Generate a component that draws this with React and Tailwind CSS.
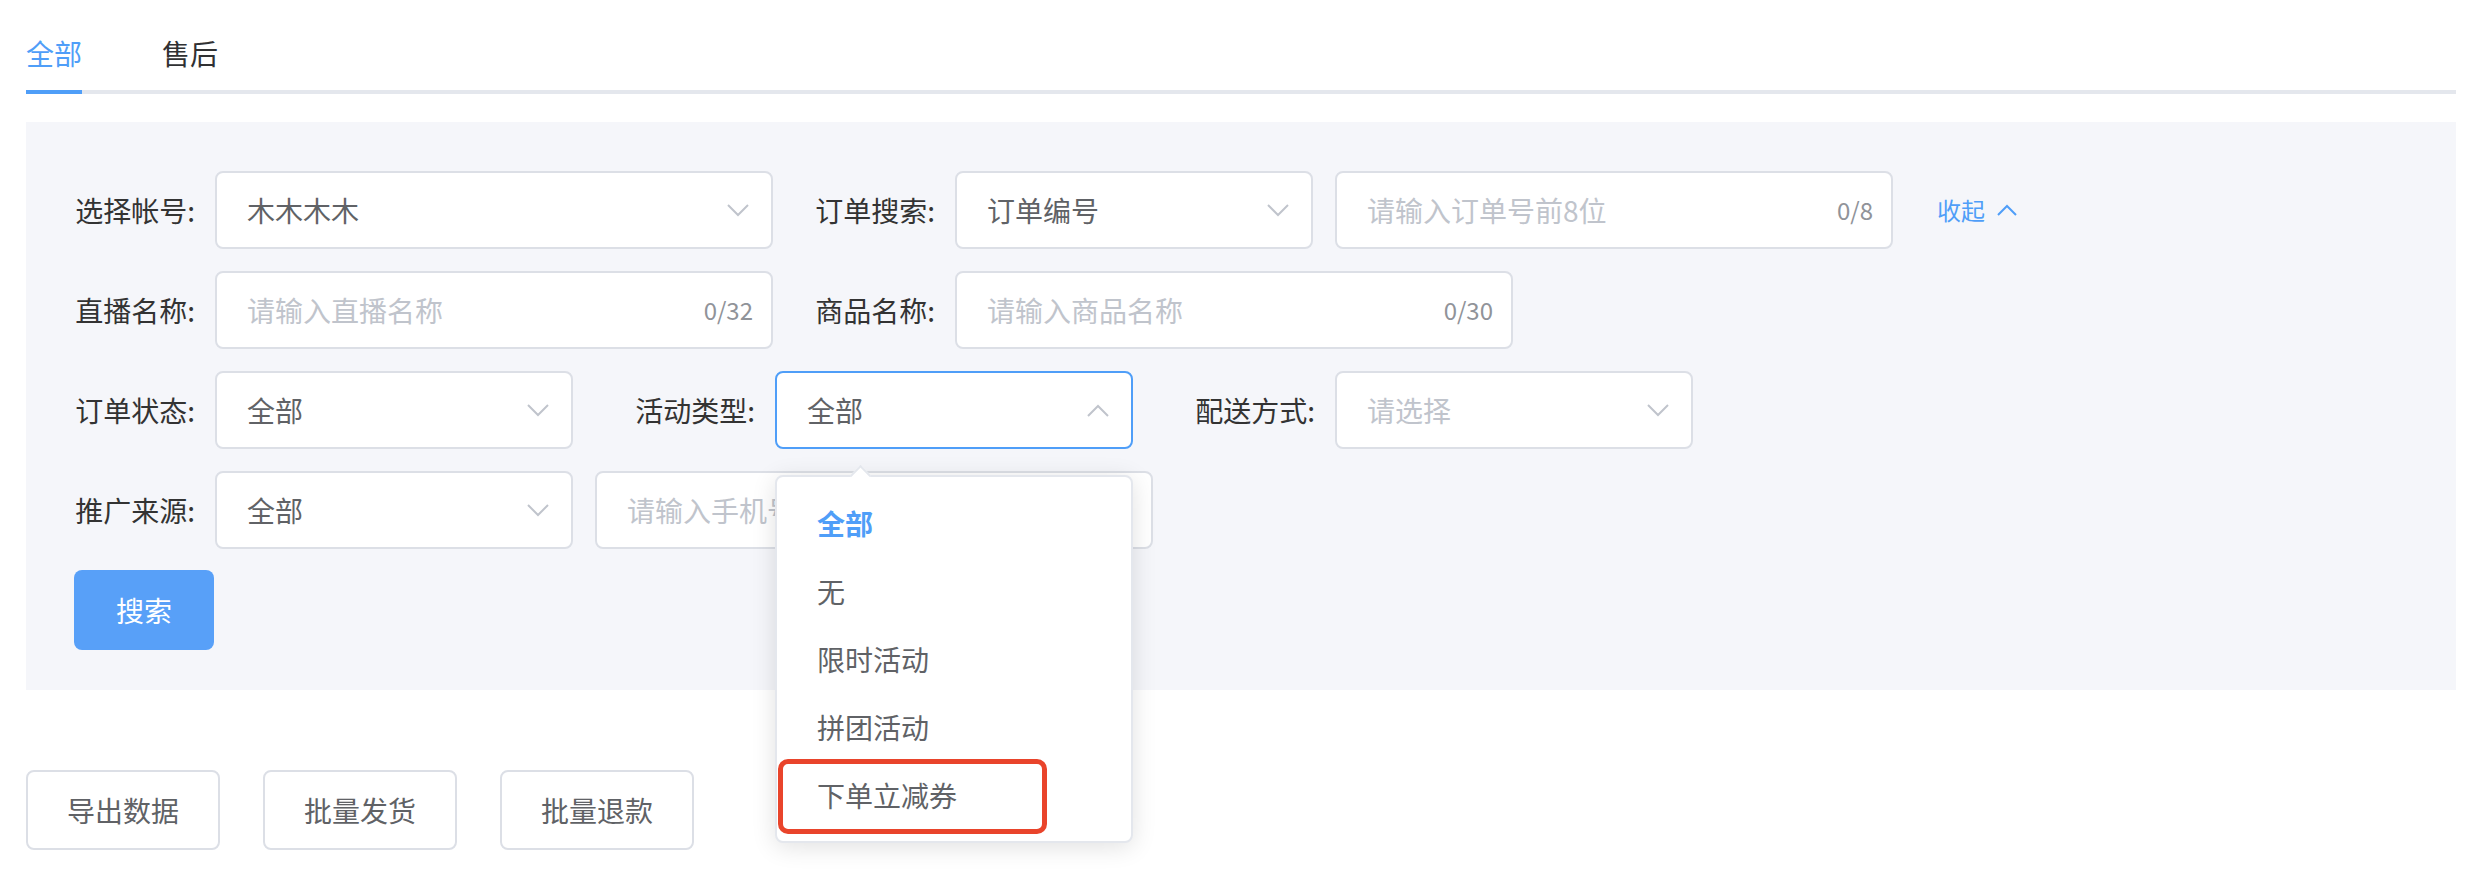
const FONT = "font-['Noto_Sans_CJK_SC','Noto_Sans',sans-serif]";

function Chevron({ up = false }) {
  return (
    <svg width="22" height="13" viewBox="0 0 22 13" fill="none" className="shrink-0">
      <polyline
        points={up ? "1,12 11,2 21,12" : "1,1 11,11 21,1"}
        stroke="#c0c4cc"
        strokeWidth="2"
        fill="none"
      />
    </svg>
  );
}

function Label({ children }) {
  return (
    <div className="w-[160px] shrink-0 pr-[20px] text-right text-[28px] leading-[78px] text-[#333]">
      {children}:
    </div>
  );
}

function Select({ value, placeholder, width = "w-[358px]", active = false, children }) {
  return (
    <div className="relative">
      <div
        className={`${width} h-[78px] rounded-[8px] border-2 bg-white flex items-center justify-between pl-[30px] pr-[22px] ${
          active ? "border-[#4f9ef8]" : "border-[#dcdfe6]"
        }`}
      >
        {value ? (
          <span className="text-[28px] text-[#606266]">{value}</span>
        ) : (
          <span className="text-[28px] text-[#c0c4cc]">{placeholder}</span>
        )}
        <Chevron up={active} />
      </div>
      {children}
    </div>
  );
}

function TextInput({ placeholder, count, width = "w-[558px]" }) {
  return (
    <div
      className={`${width} h-[78px] rounded-[8px] border-2 border-[#dcdfe6] bg-white flex items-center justify-between pl-[30px] pr-[18px]`}
    >
      <span className="text-[28px] text-[#c0c4cc] whitespace-nowrap overflow-hidden">{placeholder}</span>
      {count && <span className="text-[24px] text-[#909399]">{count}</span>}
    </div>
  );
}

function ActivityDropdown() {
  const options = ["全部", "无", "限时活动", "拼团活动", "下单立减券"];
  return (
    <div className="absolute left-0 top-[104px] z-10 w-[358px] rounded-[8px] border-2 border-[#e4e7ed] bg-white py-[12px] shadow-[0_4px_24px_rgba(0,0,0,0.12)]">
      <div className="absolute left-[76px] top-[-9px] h-[15px] w-[15px] rotate-45 border-l-2 border-t-2 border-[#e4e7ed] bg-white" />
      {options.map((opt, idx) => (
        <div
          key={opt}
          className={`h-[68px] pl-[40px] flex items-center text-[28px] ${
            idx === 0 ? "text-[#4f9ef8] font-bold" : "text-[#606266]"
          }`}
        >
          {opt}
        </div>
      ))}
      <div className="absolute left-[1px] top-[282px] h-[75px] w-[269px] rounded-[10px] border-[5px] border-[#e9442b]" />
    </div>
  );
}

export default function App() {
  return (
    <div className={`${FONT} bg-white min-h-[884px] pt-[16px] pl-[26px] pr-[34px]`}>
      <div className="flex h-[78px] border-b-4 border-[#e4e7ed]">
        <div className="relative pr-[40px] text-[28px] leading-[74px] text-[#4f9ef8]">
          全部
          <div className="absolute left-0 right-[40px] bottom-[-4px] h-[4px] bg-[#4f9ef8]" />
        </div>
        <div className="pl-[40px] text-[28px] leading-[74px] text-[#303133]">售后</div>
      </div>

      <div className="mt-[28px] bg-[#f5f6fa] pl-[29px] pt-[49px] pb-[40px]">
        <div className="flex items-center mb-[22px]">
          <Label>选择帐号</Label>
          <Select value="木木木木" width="w-[558px]" />
          <div className="ml-[22px]" />
          <Label>订单搜索</Label>
          <Select value="订单编号" />
          <div className="ml-[22px]" />
          <TextInput placeholder="请输入订单号前8位" count="0/8" />
          <div className="ml-[44px] flex items-center gap-[12px] text-[24px] text-[#4f9ef8]">
            收起
            <svg width="20" height="12" viewBox="0 0 20 12" fill="none">
              <polyline points="1,11 10,2 19,11" stroke="#4f9ef8" strokeWidth="2" fill="none" />
            </svg>
          </div>
        </div>

        <div className="flex items-center mb-[22px]">
          <Label>直播名称</Label>
          <TextInput placeholder="请输入直播名称" count="0/32" />
          <div className="ml-[22px]" />
          <Label>商品名称</Label>
          <TextInput placeholder="请输入商品名称" count="0/30" />
        </div>

        <div className="flex items-center mb-[22px]">
          <Label>订单状态</Label>
          <Select value="全部" />
          <div className="ml-[42px]" />
          <Label>活动类型</Label>
          <Select value="全部" active>
            <ActivityDropdown />
          </Select>
          <div className="ml-[42px]" />
          <Label>配送方式</Label>
          <Select placeholder="请选择" />
        </div>

        <div className="flex items-center">
          <Label>推广来源</Label>
          <Select value="全部" />
          <div className="ml-[22px]" />
          <TextInput placeholder="请输入手机号" />
        </div>

        <button
          type="button"
          className="mt-[21px] ml-[19px] h-[80px] w-[140px] rounded-[8px] bg-[#58a0f8] text-[28px] text-white"
        >
          搜索
        </button>
      </div>

      <div className="mt-[80px] flex gap-[43px]">
        {["导出数据", "批量发货", "批量退款"].map((t) => (
          <button
            key={t}
            type="button"
            className="h-[80px] w-[194px] rounded-[8px] border-2 border-[#dcdfe6] bg-white text-[28px] text-[#606266]"
          >
            {t}
          </button>
        ))}
      </div>
    </div>
  );
}
